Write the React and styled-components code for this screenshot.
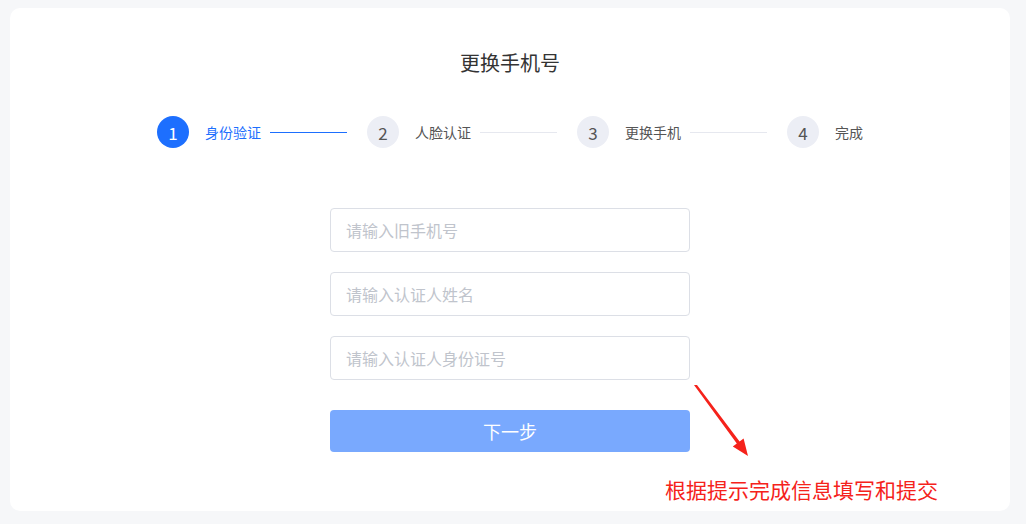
import React from 'react';
import styled, { createGlobalStyle } from 'styled-components';

const GlobalStyle = createGlobalStyle`
  * { box-sizing: border-box; }
  body {
    margin: 0;
    background: #f6f7f9;
    font-family: "Noto Sans CJK SC", "Noto Sans", sans-serif;
  }
`;

const steps = [
  { no: 1, label: '身份验证' },
  { no: 2, label: '人脸认证' },
  { no: 3, label: '更换手机' },
  { no: 4, label: '完成' },
];

const fields = ['请输入旧手机号', '请输入认证人姓名', '请输入认证人身份证号'];

const App = () => {
  const current = 1;
  return (
    <>
      <GlobalStyle />
      <Page>
        <Card>
          <Title>更换手机号</Title>
          <Steps>
            {steps.map((s, i) => (
              <Step key={s.no} $last={i === steps.length - 1}>
                <Circle $active={s.no <= current}>{s.no}</Circle>
                <StepLabel $active={s.no <= current}>{s.label}</StepLabel>
                {i < steps.length - 1 && <Line $active={s.no <= current} />}
              </Step>
            ))}
          </Steps>
          <Form>
            {fields.map((f) => (
              <Input key={f} placeholder={f} />
            ))}
            <Button type='button'>下一步</Button>
          </Form>
          <Arrow width='70' height='90' viewBox='0 0 70 90'>
            <polygon points='8,7 11,7 53.6,63.4 57.6,60.6 62,78 46.8,68.6 50.8,65.6' fill='#f5221b' />
          </Arrow>
          <Hint>根据提示完成信息填写和提交</Hint>
        </Card>
      </Page>
    </>
  );
};

const Page = styled.div`
  padding: 8px 16px 13px 10px;
`;

const Card = styled.div`
  position: relative;
  height: 503px;
  background: #fff;
  border-radius: 10px;
  padding-top: 41px;
  display: flex;
  flex-direction: column;
  align-items: center;
`;

const Title = styled.div`
  font-size: 20px;
  line-height: 28px;
  color: #333;
`;

const Steps = styled.div`
  display: flex;
  margin-top: 39px;
`;

const Step = styled.div`
  display: flex;
  align-items: center;
  width: ${(p) => (p.$last ? 'auto' : '210px')};
`;

const Circle = styled.div`
  width: 32px;
  height: 32px;
  border-radius: 50%;
  flex-shrink: 0;
  display: flex;
  align-items: center;
  justify-content: center;
  font-size: 17px;
  background: ${(p) => (p.$active ? '#1d6ffe' : '#eceef5')};
  color: ${(p) => (p.$active ? '#fff' : '#555')};
`;

const StepLabel = styled.div`
  margin-left: 16px;
  font-size: 14px;
  white-space: nowrap;
  color: ${(p) => (p.$active ? '#1d6ffe' : '#555')};
`;

const Line = styled.div`
  flex: 1;
  height: 1px;
  margin: 0 20px 0 9px;
  background: ${(p) => (p.$active ? '#1d6ffe' : '#e6e8ef')};
`;

const Form = styled.div`
  margin-top: 60px;
  width: 360px;
  display: flex;
  flex-direction: column;
  gap: 20px;
`;

const Input = styled.input`
  height: 44px;
  border: 1px solid #dcdfe6;
  border-radius: 4px;
  padding: 0 15px;
  font-family: inherit;
  font-size: 16px;
  color: #333;
  outline: none;
  &::placeholder {
    color: #c0c4cc;
  }
`;

const Button = styled.button`
  margin-top: 10px;
  height: 42px;
  border: none;
  border-radius: 4px;
  background: #79a9fe;
  color: #fff;
  font-family: inherit;
  font-size: 18px;
`;

const Arrow = styled.svg`
  position: absolute;
  left: 676px;
  top: 370px;
`;

const Hint = styled.div`
  position: absolute;
  left: 655px;
  top: 466px;
  font-size: 21px;
  line-height: 30px;
  color: #f5221b;
  white-space: nowrap;
`;

export default App;
